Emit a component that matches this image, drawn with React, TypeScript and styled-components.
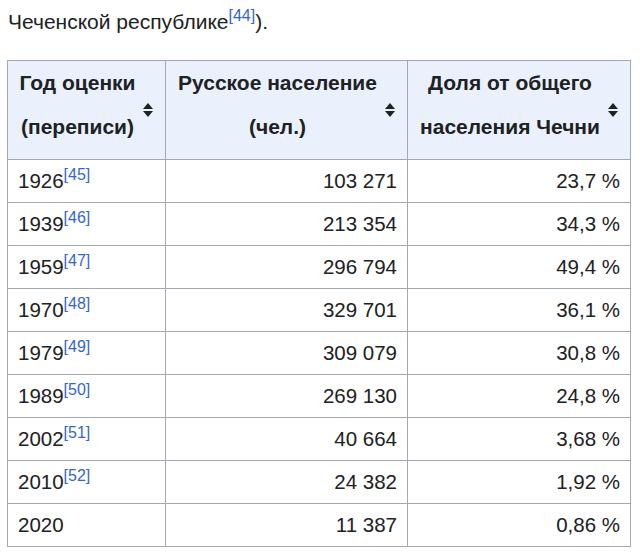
import React from "react";
import styled, { createGlobalStyle } from "styled-components";

const Global = createGlobalStyle`
  html, body { margin: 0; padding: 0; background: #ffffff; }
  body { font-family: "Liberation Sans", Arial, sans-serif; color: #202122; }
`;

const Page = styled.div`
  padding: 8px 0 0 7px;
  width: 640px;
  box-sizing: border-box;
`;

const Para = styled.p`
  margin: 0 0 24px 1px;
  font-size: 21px;
  line-height: 28px;
`;

const Ref = styled.sup`
  color: #3366cc;
  font-size: 16px;
  line-height: 1;
  vertical-align: 8px;
`;

const Table = styled.table`
  border-collapse: collapse;
  border: 1px solid #a2a9b1;
  font-size: 20.5px;
  color: #202122;
`;

const Th = styled.th<{ $w: number }>`
  width: ${(p) => p.$w}px;
  box-sizing: border-box;
  background: #eaf1fc;
  border: 1px solid #a2a9b1;
  font-weight: bold;
  font-size: 21px;
  padding: 0 10px;
  color: #202122;
`;

const HeadInner = styled.div`
  display: flex;
  align-items: center;
  gap: 6px;
`;

const HeadText = styled.span`
  flex: 1;
  text-align: center;
  line-height: 44px;
  padding-bottom: 10px;
`;

const SortIcon = styled.svg`
  flex: none;
  margin-right: 2px;
`;

const Td = styled.td<{ $num?: boolean }>`
  border: 1px solid #a2a9b1;
  height: 43px;
  box-sizing: border-box;
  padding: 0 10px;
  line-height: 28px;
  text-align: ${(p) => (p.$num ? "right" : "left")};
`;

const Sort = () => (
  <SortIcon width="10" height="14" viewBox="0 0 10 14">
    <polygon points="5,0 10,6 0,6" fill="#202122" />
    <polygon points="0,8 10,8 5,14" fill="#202122" />
  </SortIcon>
);

const Head = ({ w, a, b }: { w: number; a: string; b: string }) => (
  <Th $w={w}>
    <HeadInner>
      <HeadText>
        {a}
        <br />
        {b}
      </HeadText>
      <Sort />
    </HeadInner>
  </Th>
);

const rows: [string, string | null, string, string][] = [
  ["1926", "45", "103 271", "23,7 %"],
  ["1939", "46", "213 354", "34,3 %"],
  ["1959", "47", "296 794", "49,4 %"],
  ["1970", "48", "329 701", "36,1 %"],
  ["1979", "49", "309 079", "30,8 %"],
  ["1989", "50", "269 130", "24,8 %"],
  ["2002", "51", "40 664", "3,68 %"],
  ["2010", "52", "24 382", "1,92 %"],
  ["2020", null, "11 387", "0,86 %"],
];

export default function App() {
  return (
    <Page>
      <Global />
      <Para>
        Чеченской республике<Ref>[44]</Ref>).
      </Para>
      <Table>
        <thead>
          <tr>
            <Head w={158} a="Год оценки" b="(переписи)" />
            <Head w={242} a="Русское население" b="(чел.)" />
            <Head w={223} a="Доля от общего" b="населения Чечни" />
          </tr>
        </thead>
        <tbody>
          {rows.map(([y, r, n, p]) => (
            <tr key={y}>
              <Td>
                {y}
                {r && <Ref>[{r}]</Ref>}
              </Td>
              <Td $num>{n}</Td>
              <Td $num>{p}</Td>
            </tr>
          ))}
        </tbody>
      </Table>
    </Page>
  );
}
